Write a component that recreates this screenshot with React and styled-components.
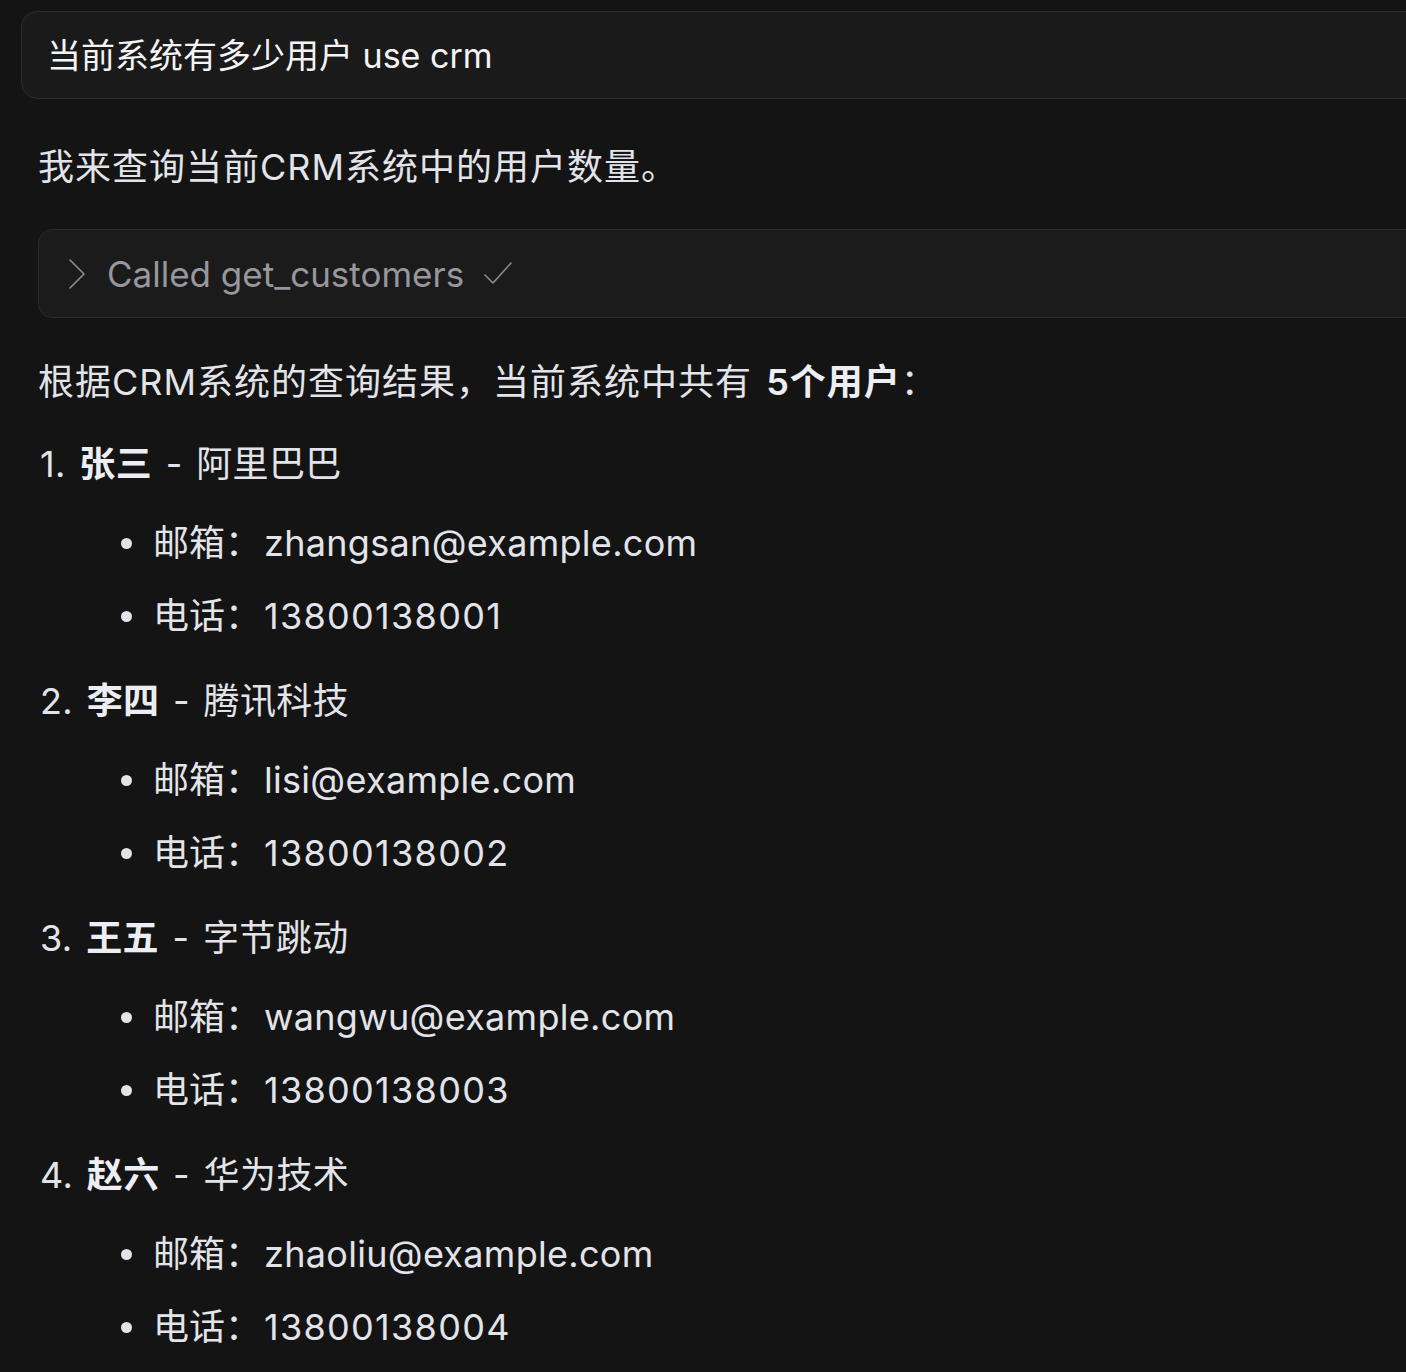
import React from 'react';
import styled, { createGlobalStyle } from 'styled-components';

const GlobalStyle = createGlobalStyle`
    html, body {
        margin: 0;
        padding: 0;
        background: #141414;
        overflow: hidden;
    }
    body {
        font-family: "Inter", "Noto Sans CJK SC", sans-serif;
        -webkit-font-smoothing: antialiased;
    }
`

const Page = styled.div`
    width: 1460px;
    min-height: 1372px;
    padding: 11px 0 0 21px;
    box-sizing: border-box;
    color: #e3e4e9;
`

const UserBubble = styled.div`
    border: 1px solid #2c2c2c;
    background: #1a1a1a;
    border-radius: 16px;
    padding: 18px 25px 16px;
    font-size: 34px;
    line-height: 52px;
    color: #f4f4f6;
`

const Reply = styled.div`
    padding-left: 17px;
    word-spacing: 3px;
`

const Para = styled.p`
    margin: ${p => p.$top || 0}px 0 0 0;
    font-size: 36px;
    line-height: 52px;
    letter-spacing: 1px;
`

const ToolCall = styled.div`
    margin-top: 36px;
    border: 1px solid #2b2b2b;
    background: #1b1b1b;
    border-radius: 14px;
    padding: 18px 28px 17px;
    display: flex;
    align-items: center;
    gap: 18px;
    font-size: 35px;
    line-height: 52px;
    color: #97979d;
    word-spacing: 0;
`

const Icon = styled.svg`
    flex: none;
    stroke: #8c8c92;
    fill: none;
    stroke-width: 1.6;
    stroke-linecap: round;
    stroke-linejoin: round;
`

const Item = styled.div`
    margin-top: ${p => p.$first ? 30 : 33}px;
    font-size: 36px;
    line-height: 52px;
    padding-left: 2px;
    letter-spacing: 0.4px;
`

const Strong = styled.b`
    font-weight: 600;
    color: #eceef3;
`

const Bullets = styled.ul`
    list-style: none;
    margin: 27px 0 0 0;
    padding: 0 0 0 115px;
`

const Bullet = styled.li`
    position: relative;
    font-size: 36px;
    line-height: 52px;
    & + & {
        margin-top: 21px;
    }
    &::before {
        content: '';
        position: absolute;
        left: -32px;
        top: 21px;
        width: 11px;
        height: 11px;
        border-radius: 50%;
        background: #e3e4e9;
    }
`

const Value = styled.span`
    margin-left: 3px;
    letter-spacing: ${p => p.$digits ? 1.3 : 0.3}px;
`

const customers = [
    { name: '张三', company: '阿里巴巴', email: 'zhangsan@example.com', phone: '13800138001' },
    { name: '李四', company: '腾讯科技', email: 'lisi@example.com', phone: '13800138002' },
    { name: '王五', company: '字节跳动', email: 'wangwu@example.com', phone: '13800138003' },
    { name: '赵六', company: '华为技术', email: 'zhaoliu@example.com', phone: '13800138004' },
]

const App = () => {
    return <Page>
        <GlobalStyle />
        <UserBubble>当前系统有多少用户 use crm</UserBubble>
        <Reply>
            <Para $top={42}>我来查询当前CRM系统中的用户数量。</Para>
            <ToolCall>
                <Icon width="22" height="34" viewBox="0 0 22 34">
                    <path d="M3 3 L17 17 L3 31" />
                </Icon>
                <span>Called get_customers</span>
                <Icon width="32" height="30" viewBox="0 0 32 30">
                    <path d="M3 16 L11 24 L29 4" />
                </Icon>
            </ToolCall>
            <Para $top={38}>根据CRM系统的查询结果，当前系统中共有 <Strong>5个用户</Strong>：</Para>
            {customers.map((c, i) =>
                <div key={c.name}>
                    <Item $first={i === 0}>{i + 1}. <Strong>{c.name}</Strong> - {c.company}</Item>
                    <Bullets>
                        <Bullet>邮箱：<Value>{c.email}</Value></Bullet>
                        <Bullet>电话：<Value $digits>{c.phone}</Value></Bullet>
                    </Bullets>
                </div>
            )}
        </Reply>
    </Page>
}

export default App;
